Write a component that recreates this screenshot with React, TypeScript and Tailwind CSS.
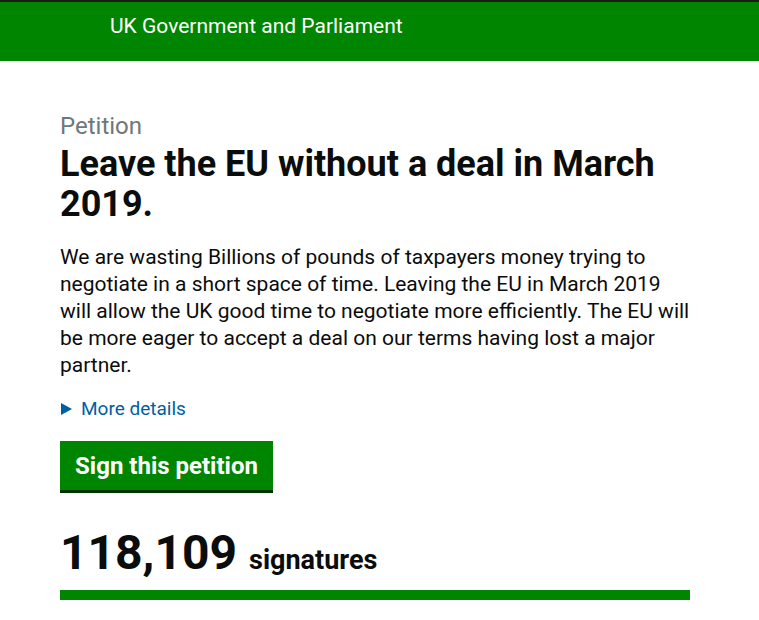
import React from "react";

const App: React.FC = () => {
  return (
    <div className="min-h-[620px] bg-white font-['Roboto',sans-serif]">
      <header className="h-[61px] border-t-2 border-[#1b1b1b] bg-[#008500]">
        <div className="pl-[110px] pt-[11px] text-[21px] leading-[26px] text-white">
          UK Government and Parliament
        </div>
      </header>
      <main className="px-[60px] pt-[50px]">
        <div className="w-[636px]">
          <p className="text-[24px] leading-[30px] text-[#6f777b]">Petition</p>
          <h1 className="mt-[3px] text-[36px] font-bold leading-[40px] text-[#0b0c0c]">
            Leave the EU without a deal in March 2019.
          </h1>
          <p className="mt-[20px] text-[21px] leading-[27px] text-[#0b0c0c]">
            We are wasting Billions of pounds of taxpayers money trying to
            negotiate in a short space of time. Leaving the EU in March 2019
            will allow the UK good time to negotiate more efficiently. The EU
            will be more eager to accept a deal on our terms having lost a
            major partner.
          </p>
          <div className="mt-[18px] flex items-center gap-[8px] text-[19px] leading-[24px] text-[#005ea5]">
            <svg width="12" height="12" viewBox="0 0 12 12" className="ml-[1px]">
              <path d="M0 0 L11 6 L0 12 Z" fill="#005ea5" />
            </svg>
            <span>More details</span>
          </div>
          <button className="mt-[20px] h-[52px] w-[213px] border-b-[3px] border-[#003300] bg-[#008500] text-[24px] font-bold text-white">
            Sign this petition
          </button>
          <div className="mt-[32px] flex h-[56px] items-baseline gap-[12px] text-[#0b0c0c]">
            <span className="text-[48px] font-bold leading-[56px]">118,109</span>
            <span className="text-[27px] font-bold leading-[56px]">signatures</span>
          </div>
          <div className="mt-[9px] h-[10px] w-[630px] bg-[#008500]" />
        </div>
      </main>
    </div>
  );
};

export default App;
